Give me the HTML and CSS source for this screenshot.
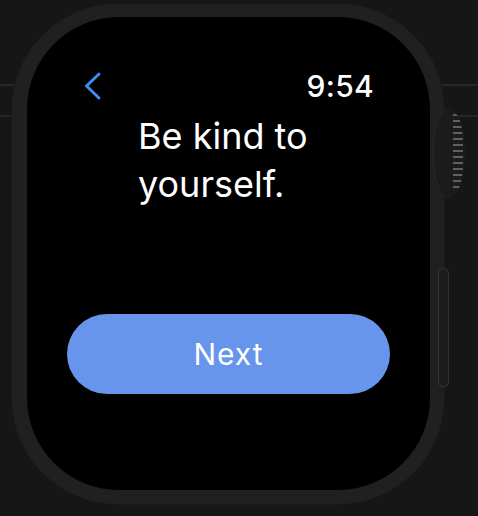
FILE: index.html
```html
<!DOCTYPE html>
<html>
<head>
<meta charset="utf-8">
<link rel="stylesheet" href="styles.css">
</head>
<body>
<div class="stage">
  <div class="case">
    <div class="screen">
      <div class="header">
        <svg class="back" width="20" height="30" viewBox="0 0 20 30"><path d="M16 3 L3.5 15 L16 27" fill="none" stroke="#3f8ef4" stroke-width="3" stroke-linecap="round" stroke-linejoin="round"/></svg>
        <span class="time">9:54</span>
      </div>
      <div class="title">Be kind to<br>yourself.</div>
      <button class="next">Next</button>
    </div>
    <div class="crown"><div class="ridges"></div></div>
    <div class="side-button"></div>
  </div>
</div>
</body>
</html>
```
FILE: styles.css
```css
html, body {
  margin: 0;
  padding: 0;
}
body {
  width: 478px;
  height: 516px;
  overflow: hidden;
  background:
    linear-gradient(#262626, #262626) 0 84px / 100% 2px no-repeat,
    linear-gradient(#262626, #262626) 0 115px / 100% 2px no-repeat,
    #161616;
  font-family: Inter, "Noto Sans", sans-serif;
}
.stage {
  padding: 4px 0 0 12px;
}
.case {
  position: relative;
  width: 432px;
  height: 500px;
  box-sizing: border-box;
  padding: 13px 14px 14px 15px;
  background: #202020;
  border-radius: 106px;
  box-shadow: 0 0 0 1px #1a1a1a;
}
.screen {
  width: 403px;
  height: 473px;
  background: #000;
  border-radius: 92px;
  display: flex;
  flex-direction: column;
  align-items: stretch;
  padding: 54px 56px 0 56px;
  box-sizing: border-box;
  position: relative;
  z-index: 1;
}
.header {
  height: 30px;
  display: flex;
  justify-content: space-between;
  align-items: flex-start;
}
.back {
  display: block;
}
.time {
  color: #fff;
  font-size: 30px;
  line-height: 30px;
  font-weight: 500;
  letter-spacing: 0.3px;
}
.title {
  margin: 11px 0 0 55px;
  color: #fff;
  font-size: 36px;
  line-height: 48px;
  font-weight: 400;
}
.next {
  margin: 106px -16px 0 -16px;
  height: 80px;
  border: none;
  border-radius: 40px;
  background: #6795ec;
  color: #fff;
  font-family: Inter, "Noto Sans", sans-serif;
  font-size: 30px;
  font-weight: 400;
  letter-spacing: 1px;
  padding: 0;
}
.crown {
  position: absolute;
  left: 421px;
  top: 104px;
  width: 32px;
  height: 90px;
  border-radius: 16px / 40px;
  background: #1b1b1b;
  box-shadow: inset 1px 0 0 #2a2a2a;
  overflow: hidden;
}
.ridges {
  position: absolute;
  right: 2px;
  top: 6px;
  width: 10px;
  height: 78px;
  background: repeating-linear-gradient(#606060 0 2px, transparent 2px 6px);
  border-radius: 0 8px 8px 0 / 0 30px 30px 0;
}
.side-button {
  position: absolute;
  left: 426px;
  top: 264px;
  width: 11px;
  height: 119px;
  border-radius: 6px;
  background: #1d1d1d;
  box-shadow: inset 0 0 0 1px #333;
}
```
